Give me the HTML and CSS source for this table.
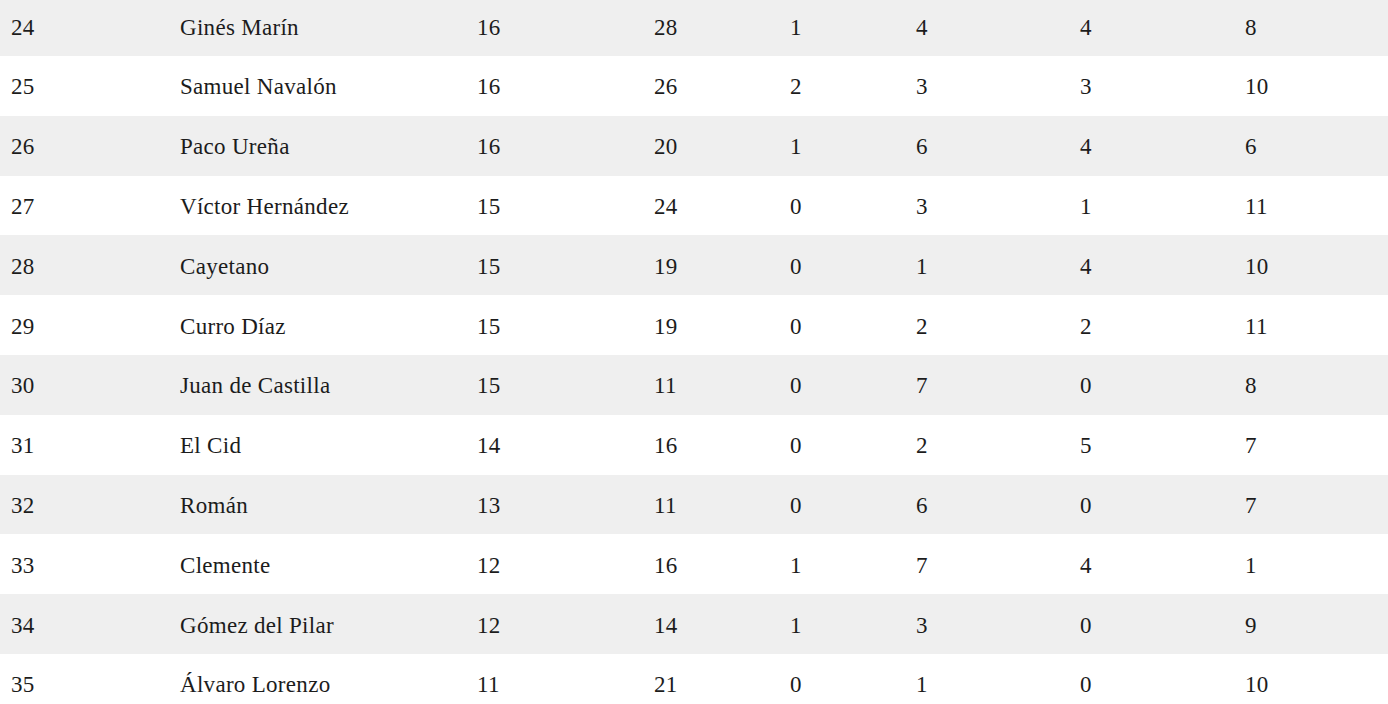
FILE: index.html
```html
<!DOCTYPE html>
<html lang="es">
<head>
<meta charset="utf-8">
<title>Clasificación</title>
<link rel="stylesheet" href="styles.css">
</head>
<body>
<table class="ranking">
<colgroup>
<col class="c1"><col class="c2"><col class="c3"><col class="c4"><col class="c5"><col class="c6"><col class="c7"><col class="c8">
</colgroup>
<tbody>
<tr><td>24</td><td>Ginés Marín</td><td>16</td><td>28</td><td>1</td><td>4</td><td>4</td><td>8</td></tr>
<tr><td>25</td><td>Samuel Navalón</td><td>16</td><td>26</td><td>2</td><td>3</td><td>3</td><td>10</td></tr>
<tr><td>26</td><td>Paco Ureña</td><td>16</td><td>20</td><td>1</td><td>6</td><td>4</td><td>6</td></tr>
<tr><td>27</td><td>Víctor Hernández</td><td>15</td><td>24</td><td>0</td><td>3</td><td>1</td><td>11</td></tr>
<tr><td>28</td><td>Cayetano</td><td>15</td><td>19</td><td>0</td><td>1</td><td>4</td><td>10</td></tr>
<tr><td>29</td><td>Curro Díaz</td><td>15</td><td>19</td><td>0</td><td>2</td><td>2</td><td>11</td></tr>
<tr><td>30</td><td>Juan de Castilla</td><td>15</td><td>11</td><td>0</td><td>7</td><td>0</td><td>8</td></tr>
<tr><td>31</td><td>El Cid</td><td>14</td><td>16</td><td>0</td><td>2</td><td>5</td><td>7</td></tr>
<tr><td>32</td><td>Román</td><td>13</td><td>11</td><td>0</td><td>6</td><td>0</td><td>7</td></tr>
<tr><td>33</td><td>Clemente</td><td>12</td><td>16</td><td>1</td><td>7</td><td>4</td><td>1</td></tr>
<tr><td>34</td><td>Gómez del Pilar</td><td>12</td><td>14</td><td>1</td><td>3</td><td>0</td><td>9</td></tr>
<tr><td>35</td><td>Álvaro Lorenzo</td><td>11</td><td>21</td><td>0</td><td>1</td><td>0</td><td>10</td></tr>
</tbody>
</table>
</body>
</html>
```
FILE: styles.css
```css
html, body {
  margin: 0;
  padding: 0;
  background: #ffffff;
}
body {
  font-family: "Liberation Serif", "Times New Roman", serif;
  color: #1c1c1c;
  overflow: hidden;
}
.ranking {
  width: 1388px;
  border-collapse: collapse;
  table-layout: fixed;
  margin-top: -3.8px;
}
.c1 { width: 169px; }
.c2 { width: 297px; }
.c3 { width: 177px; }
.c4 { width: 136px; }
.c5 { width: 126px; }
.c6 { width: 164px; }
.c7 { width: 165px; }
.c8 { width: 154px; }
.ranking tr {
  height: 59.8px;
}
.ranking tr:nth-child(odd) {
  background: #efefef;
}
.ranking td {
  padding: 3px 0 0 11px;
  font-size: 23px;
  line-height: 26px;
  letter-spacing: 0.3px;
  vertical-align: middle;
  white-space: nowrap;
}
```
